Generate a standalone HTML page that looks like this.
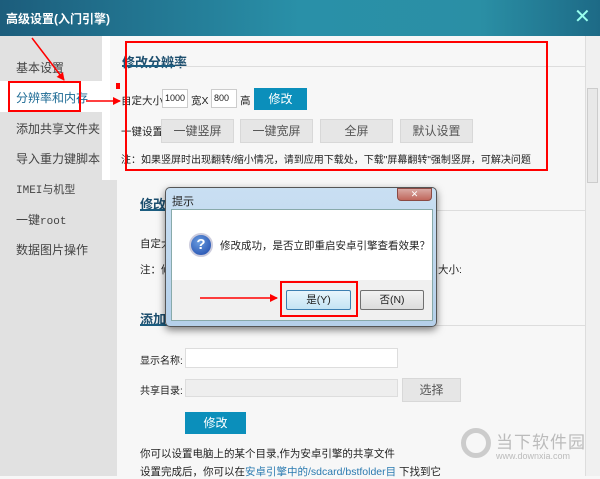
<!DOCTYPE html>
<html><head><meta charset="utf-8"><style>
*{margin:0;padding:0;box-sizing:border-box}
body{width:600px;height:476px;overflow:hidden;position:relative;background:#f7f7f7;font-family:"Liberation Sans","Noto Sans CJK SC",sans-serif;font-size:10.5px;color:#222}
.a{position:absolute;white-space:nowrap}
.title{left:0;top:0;width:600px;height:36px;background:linear-gradient(90deg,#1c5d7c,#2990a8 50%,#2a8fa5 80%,#1d6a86);color:#fff;font-size:12px;font-weight:bold}
.side{left:0;top:36px;width:102px;height:440px;background:#e1e1e1}
.side div{position:absolute;left:16px;font-size:12px;color:#444}
.btn{background:#e6e6e6;border:1px solid #d8d8d8;color:#555;text-align:center;font-size:12px}
.blue{background:#0b8fbb;color:#fff;text-align:center;font-size:12px}
.inp{background:#fff;border:1px solid #ccc}
.sec{font-size:13px;font-weight:bold;color:#1c4e6e}
.line{height:1px;background:#ddd}
.red{border:2px solid #f00}
</style></head><body>
<div class="a title"><span class="a" style="left:6px;top:10px">高级设置(入门引擎)</span><span class="a" style="left:574px;top:4px;font-size:20px;font-weight:normal;color:#9fe">✕</span></div>
<div class="a side">
<div style="top:23px">基本设置</div>
<div style="top:45px;left:0;width:102px;height:31px;background:#fff"></div>
<div style="top:53px;color:#1c6a94">分辨率和内存</div>
<div style="top:84px">添加共享文件夹</div>
<div style="top:114px">导入重力键脚本</div>
<div style="top:145px;font-family:'Liberation Mono','Noto Sans CJK SC',monospace;font-size:11px">IMEI与机型</div>
<div style="top:175px">一键<span style="font-family:'Liberation Mono',monospace;font-size:11px">root</span></div>
<div style="top:205px">数据图片操作</div>
</div>
<div class="a" style="left:102px;top:36px;width:8px;height:144px;background:#fff"></div>
<div class="a" style="left:102px;top:180px;width:15px;height:296px;background:#e1e1e1"></div>
<div class="a red" style="left:8px;top:81px;width:73px;height:31px"></div>
<div class="a" style="left:585px;top:36px;width:15px;height:440px;background:#f0f0f0;border-left:1px solid #ddd"></div>
<div class="a" style="left:587px;top:88px;width:11px;height:95px;background:#e8e8e8;border:1px solid #ccc"></div>

<!-- section 1 -->
<div class="a sec" style="left:122px;top:52px">修改分辨率</div>
<div class="a" style="left:122px;top:65px;width:53px;height:2px;background:#1c5d80"></div>
<div class="a line" style="left:175px;top:66px;width:410px"></div>
<div class="a" style="left:121px;top:93px">自定大小:</div>
<div class="a inp" style="left:162px;top:89px;width:26px;height:19px;font-size:9px;padding:3px 2px">1000</div>
<div class="a" style="left:191px;top:93px">宽X</div>
<div class="a inp" style="left:211px;top:89px;width:26px;height:19px;font-size:9px;padding:3px 2px">800</div>
<div class="a" style="left:240px;top:93px">高</div>
<div class="a blue" style="left:254px;top:88px;width:53px;height:22px;line-height:22px">修改</div>
<div class="a" style="left:121px;top:124px">一键设置:</div>
<div class="a btn" style="left:161px;top:119px;width:73px;height:24px;line-height:22px">一键竖屏</div>
<div class="a btn" style="left:240px;top:119px;width:73px;height:24px;line-height:22px">一键宽屏</div>
<div class="a btn" style="left:320px;top:119px;width:73px;height:24px;line-height:22px">全屏</div>
<div class="a btn" style="left:400px;top:119px;width:73px;height:24px;line-height:22px">默认设置</div>
<div class="a" style="left:121px;top:151px;font-size:10px">注：如果竖屏时出现翻转/缩小情况，请到应用下载处，下载"屏幕翻转"强制竖屏，可解决问题</div>
<div class="a red" style="left:125px;top:41px;width:423px;height:130px"></div>
<div class="a" style="left:116px;top:83px;width:4px;height:6px;background:#f00"></div>

<!-- section 2 -->
<div class="a sec" style="left:140px;top:194px">修改分</div>
<div class="a" style="left:140px;top:209px;width:50px;height:2px;background:#1c5d80"></div>
<div class="a line" style="left:190px;top:210px;width:395px"></div>
<div class="a" style="left:140px;top:236px">自定大</div>
<div class="a" style="left:140px;top:262px">注：修</div>
<div class="a" style="left:438px;top:262px">大小:</div>
<div class="a sec" style="left:140px;top:309px">添加共</div>
<div class="a" style="left:140px;top:324px;width:50px;height:2px;background:#1c5d80"></div>
<div class="a line" style="left:190px;top:325px;width:395px"></div>
<div class="a" style="left:140px;top:352px;font-size:10px">显示名称:</div>
<div class="a inp" style="left:185px;top:348px;width:213px;height:20px;border-color:#ddd"></div>
<div class="a" style="left:140px;top:382px;font-size:10px">共享目录:</div>
<div class="a" style="left:185px;top:379px;width:213px;height:18px;background:#eee;border:1px solid #ddd"></div>
<div class="a btn" style="left:402px;top:378px;width:59px;height:24px;line-height:22px">选择</div>
<div class="a blue" style="left:185px;top:412px;width:61px;height:22px;line-height:22px">修改</div>
<div class="a" style="left:140px;top:446px">你可以设置电脑上的某个目录,作为安卓引擎的共享文件</div>
<div class="a" style="left:140px;top:464px">设置完成后，你可以在<span style="color:#2a7ab0">安卓引擎中的/sdcard/bstfolder目</span> 下找到它</div>

<!-- watermark -->
<div class="a" style="left:461px;top:428px;width:30px;height:30px;border:5px solid #ccc;border-radius:50%"></div>
<div class="a" style="left:496px;top:428px;font-size:17px;color:#bbb;letter-spacing:1px">当下软件园</div>
<div class="a" style="left:496px;top:451px;font-size:9px;color:#bbb">www.downxia.com</div>

<!-- dialog -->
<div class="a" style="left:165px;top:187px;width:272px;height:140px;background:linear-gradient(180deg,#c9dff2,#b5d0ea);border:1px solid #555;border-radius:5px;box-shadow:0 3px 8px rgba(0,0,0,.5)"></div>
<div class="a" style="left:172px;top:193px;font-size:11px">提示</div>
<div class="a" style="left:397px;top:188px;width:35px;height:13px;background:linear-gradient(#d9a9a3,#c0675c);border:1px solid #8a4a44;border-radius:0 0 4px 4px;color:#fff;font-size:9px;text-align:center;line-height:11px">✕</div>
<div class="a" style="left:171px;top:209px;width:262px;height:112px;background:#f0f0f0;border:1px solid #8aa"></div>
<div class="a" style="left:172px;top:210px;width:260px;height:70px;background:#fff"></div>
<div class="a" style="left:189px;top:233px;width:24px;height:24px;border-radius:50%;background:radial-gradient(circle at 40% 35%,#6a9de0,#1a45a8);border:2px solid #ccd;color:#fff;font-weight:bold;font-size:15px;text-align:center;line-height:20px">?</div>
<div class="a" style="left:220px;top:238px">修改成功，是否立即重启安卓引擎查看效果？</div>
<div class="a" style="left:286px;top:290px;width:65px;height:20px;background:linear-gradient(#e8f5fc,#c4e4f4);border:1px solid #3c7fb1;border-radius:2px;text-align:center;line-height:18px">是(Y)</div>
<div class="a" style="left:360px;top:290px;width:64px;height:20px;background:linear-gradient(#f2f2f2,#dcdcdc);border:1px solid #707070;border-radius:2px;text-align:center;line-height:18px">否(N)</div>
<div class="a red" style="left:280px;top:281px;width:78px;height:36px"></div>

<!-- arrows -->
<svg class="a" style="left:0;top:0" width="600" height="476">
<defs><marker id="m" markerWidth="8" markerHeight="8" refX="7" refY="4" orient="auto" markerUnits="userSpaceOnUse"><path d="M0,0 L8,4 L0,8z" fill="#f00"/></marker></defs>
<line x1="32" y1="38" x2="64" y2="80" stroke="#f00" stroke-width="1.5" marker-end="url(#m)"/>
<line x1="86" y1="101" x2="120" y2="101" stroke="#f00" stroke-width="1.5" marker-end="url(#m)"/>
<line x1="200" y1="298" x2="277" y2="298" stroke="#f00" stroke-width="1.5" marker-end="url(#m)"/>
</svg>
</body></html>
